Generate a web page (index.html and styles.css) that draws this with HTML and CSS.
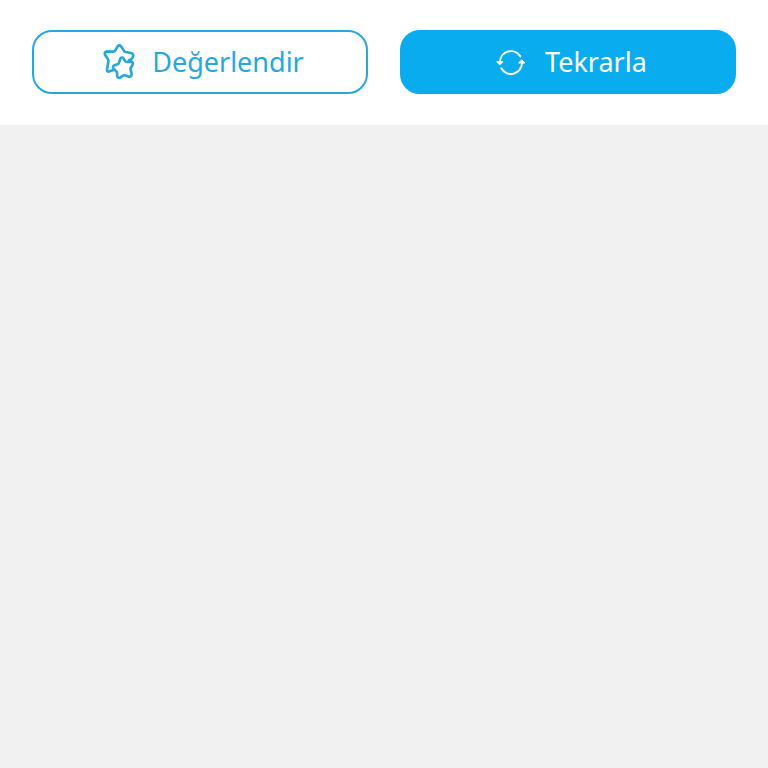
FILE: index.html
```
<!DOCTYPE html>
<html lang="tr">

<head>
    <meta charset="UTF-8">
    <meta name="viewport" content="width=device-width, initial-scale=1.0">
    <title>Değerlendir</title>
    <link rel="stylesheet" href="styles.css">
</head>

<body>
    <div id="actions">
        <button type="button" class="actionButton" id="rateButton">
            <svg class="icon" viewBox="-21 0 120 108" aria-hidden="true">
                <path d="M44 7Q49 1 54 7L62 19Q64 23 68 24L84 27Q93 30 90 38Q88 46 78 49M44 7L37 19Q35 23 30 23L12 22Q3 24 6 32L15 46Q17 49 16 53L12 77Q12 85 20 82L30 79" />
                <path d="M52 44Q57 38 62 44L67 52Q69 54 72 54L84 53Q92 54 89 62L83 72Q82 75 83 78L86 90Q86 99 78 98L66 94Q63 93 60 95L51 101Q44 103 43 96L42 86Q42 83 39 81L32 75Q27 68 34 64L44 61Q47 59 48 56Z" />
            </svg>
            <span>Değerlendir</span>
        </button>
        <button type="button" class="actionButton" id="repeatButton">
            <svg class="icon" viewBox="-6 0 120 108" aria-hidden="true">
                <path d="M27 54A33 33 0 0 1 88 37M93 58A33 33 0 0 1 31 73" />
                <path class="arrow" d="M18 53H36L27 62ZM84 57H102L93 48Z" />
            </svg>
            <span>Tekrarla</span>
        </button>
    </div>
</body>

</html>
```
FILE: styles.css
```
body {
    margin: 0;
    font-family: "Noto Sans", "Open Sans", sans-serif;
    background-color: #f1f1f1;
}

#actions {
    display: flex;
    gap: 32px;
    padding: 30px 32px 31px;
    background-color: white;
}

.actionButton {
    flex: 1;
    display: flex;
    align-items: center;
    justify-content: center;
    gap: 16px;
    height: 64px;
    padding: 0;
    box-sizing: border-box;
    border: 2px solid #27a8dc;
    border-radius: 20px;
    font-family: inherit;
    font-size: 27px;
    line-height: 36px;
    cursor: pointer;
}

#rateButton {
    background-color: white;
    color: #27a8dc;
}

#repeatButton {
    background-color: #0aacf0;
    border-color: #0aacf0;
    color: white;
}

.icon {
    width: 40px;
    height: 36px;
    fill: none;
    stroke: currentColor;
    stroke-width: 8;
    stroke-linecap: round;
    stroke-linejoin: round;
}

#repeatButton .icon {
    stroke-width: 6;
}

#repeatButton .arrow {
    fill: currentColor;
    stroke-width: 3;
}
```
